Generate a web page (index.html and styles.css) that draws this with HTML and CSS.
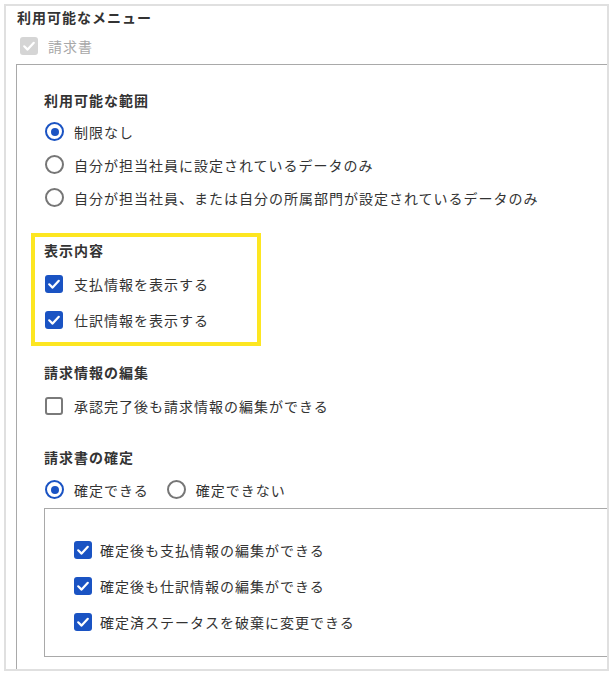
FILE: index.html
```html
<!DOCTYPE html>
<html lang="ja">
<head>
<meta charset="utf-8">
<link rel="stylesheet" href="styles.css">
</head>
<body>
<div class="frame">
  <div class="title">利用可能なメニュー</div>
  <label class="menu-row">
    <span class="cb cb-disabled"><svg viewBox="0 0 18 18"><path d="M4.2 9.3 L7.6 12.6 L13.8 5.8"/></svg></span>
    <span class="menu-label">請求書</span>
  </label>
  <div class="panel">
    <section class="sec">
      <div class="heading">利用可能な範囲</div>
      <div class="opts">
        <div class="row r-radio"><span class="radio on"></span><span>制限なし</span></div>
        <div class="row r-radio"><span class="radio"></span><span>自分が担当社員に設定されているデータのみ</span></div>
        <div class="row r-radio"><span class="radio"></span><span>自分が担当社員、または自分の所属部門が設定されているデータのみ</span></div>
      </div>
    </section>
    <section class="sec highlight">
      <div class="heading">表示内容</div>
      <div class="opts">
        <div class="row r-check"><span class="cb on"><svg viewBox="0 0 18 18"><path d="M4.2 9.3 L7.6 12.6 L13.8 5.8"/></svg></span><span>支払情報を表示する</span></div>
        <div class="row r-check"><span class="cb on"><svg viewBox="0 0 18 18"><path d="M4.2 9.3 L7.6 12.6 L13.8 5.8"/></svg></span><span>仕訳情報を表示する</span></div>
      </div>
    </section>
    <section class="sec sec3">
      <div class="heading">請求情報の編集</div>
      <div class="opts">
        <div class="row r-check"><span class="cb"></span><span>承認完了後も請求情報の編集ができる</span></div>
      </div>
    </section>
    <section class="sec sec4">
      <div class="heading">請求書の確定</div>
      <div class="opts inline">
        <div class="row r-radio"><span class="radio on"></span><span>確定できる</span></div>
        <div class="row r-radio"><span class="radio"></span><span>確定できない</span></div>
      </div>
      <div class="nested">
        <div class="row r-check n"><span class="cb on"><svg viewBox="0 0 18 18"><path d="M4.2 9.3 L7.6 12.6 L13.8 5.8"/></svg></span><span>確定後も支払情報の編集ができる</span></div>
        <div class="row r-check n"><span class="cb on"><svg viewBox="0 0 18 18"><path d="M4.2 9.3 L7.6 12.6 L13.8 5.8"/></svg></span><span>確定後も仕訳情報の編集ができる</span></div>
        <div class="row r-check n"><span class="cb on"><svg viewBox="0 0 18 18"><path d="M4.2 9.3 L7.6 12.6 L13.8 5.8"/></svg></span><span>確定済ステータスを破棄に変更できる</span></div>
      </div>
    </section>
  </div>
</div>
</body>
</html>
```

FILE: styles.css
```css
html, body {
  margin: 0;
  padding: 0;
  background: #ffffff;
}
body {
  padding: 4px 5px 0 4px;
  font-family: "Noto Sans CJK JP", "Noto Sans", sans-serif;
  font-size: 14px;
  letter-spacing: 1px;
  color: #333333;
}
.frame {
  width: 605px;
  height: 667px;
  box-sizing: border-box;
  border: 2px solid #e0e0e0;
  overflow: hidden;
}
.title {
  margin: 1px 0 0 11px;
  line-height: 20px;
  font-weight: bold;
  color: #333;
}
.menu-row {
  display: flex;
  align-items: center;
  height: 24px;
  margin-top: 7px;
  padding-left: 14px;
}
.menu-label {
  margin-left: 10px;
  color: #a8a8a8;
}
.panel {
  margin: 6px 0 0 10px;
  width: 640px;
  height: 700px;
  border: 1px solid #a9a9a9;
  padding: 25px 0 0 27px;
  box-sizing: border-box;
}
.heading {
  line-height: 20px;
  font-weight: bold;
  color: #333;
}
.opts {
  margin-top: 5px;
}
.row {
  display: flex;
  align-items: center;
  line-height: 20px;
}
.r-radio { height: 33px; }
.r-check { height: 36px; }
.highlight .opts,
.sec3 .opts,
.sec4 .opts { margin-top: 6px; }

.radio {
  width: 19px;
  height: 19px;
  box-sizing: border-box;
  border: 2px solid #767676;
  border-radius: 50%;
  margin: 0 10px 0 1px;
  position: relative;
  flex: none;
}
.radio.on {
  border-color: #1a53c3;
}
.radio.on::after {
  content: "";
  position: absolute;
  left: 3.5px;
  top: 3.5px;
  width: 8px;
  height: 8px;
  border-radius: 50%;
  background: #1a53c3;
}
.cb {
  width: 18px;
  height: 18px;
  box-sizing: border-box;
  border: 2px solid #7a7a7a;
  border-radius: 3px;
  margin: 0 11px 0 1px;
  flex: none;
  display: block;
}
.cb svg {
  display: block;
  width: 100%;
  height: 100%;
}
.cb path {
  fill: none;
  stroke: #ffffff;
  stroke-width: 2.2;
  stroke-linecap: round;
  stroke-linejoin: round;
}
.cb.on {
  border: none;
  background: #1a53c3;
}
.cb-disabled {
  width: 18px;
  height: 18px;
  border: none;
  background: #d5d5d5;
  border-radius: 3px;
  margin: 0;
}
.highlight {
  margin: 19px 0 0 -13px;
  width: 230px;
  box-sizing: border-box;
  border: 4px solid #fde621;
  padding: 3px 9px 4px 9px;
}
.sec3 { margin-top: 16px; }
.sec4 { margin-top: 23px; }
.inline {
  display: flex;
}
.inline .row + .row {
  margin-left: 17px;
}
.nested {
  margin-top: 2px;
  width: 620px;
  border: 1px solid #a9a9a9;
  padding: 23px 0 16px 29px;
  box-sizing: border-box;
}
.nested .cb {
  margin: 0 8px 0 0;
}
```
